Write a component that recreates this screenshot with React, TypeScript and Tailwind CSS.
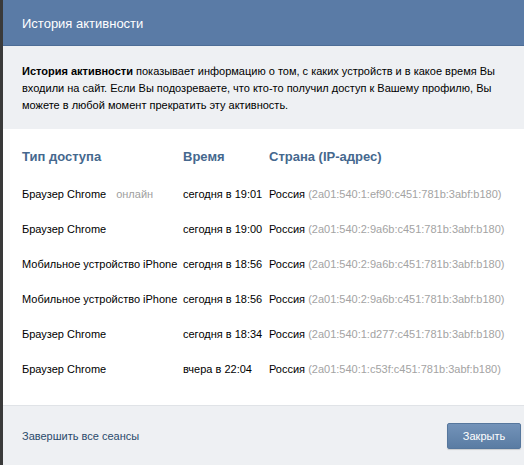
import React from 'react';

const rows = [
  { type: 'Браузер Chrome', online: true, time: 'сегодня в 19:01', ip: '2a01:540:1:ef90:c451:781b:3abf:b180' },
  { type: 'Браузер Chrome', online: false, time: 'сегодня в 19:00', ip: '2a01:540:2:9a6b:c451:781b:3abf:b180' },
  { type: 'Мобильное устройство iPhone', online: false, time: 'сегодня в 18:56', ip: '2a01:540:2:9a6b:c451:781b:3abf:b180' },
  { type: 'Мобильное устройство iPhone', online: false, time: 'сегодня в 18:56', ip: '2a01:540:2:9a6b:c451:781b:3abf:b180' },
  { type: 'Браузер Chrome', online: false, time: 'сегодня в 18:34', ip: '2a01:540:1:d277:c451:781b:3abf:b180' },
  { type: 'Браузер Chrome', online: false, time: 'вчера в 22:04', ip: '2a01:540:1:c53f:c451:781b:3abf:b180' },
];

const App: React.FC = () => {
  return (
    <div className="flex h-[465px] w-[524px] bg-[#333] font-['Liberation_Sans',sans-serif] text-[11px]">
      <div className="w-[3px] shrink-0 bg-[#3a3a3a]" />
      <div className="flex min-w-0 flex-1 flex-col bg-white">
        {/* Header */}
        <div className="flex h-[46px] shrink-0 items-center border-b border-[#4d6d96] bg-[#5a7ba6] pl-[19px] pt-[3px] text-[13px] text-white">
          История активности
        </div>

        {/* Intro */}
        <div className="h-[83px] shrink-0 bg-[#eef0f3] px-[19px] pt-[17px] leading-[17px] text-black">
          <b>История активности</b> показывает информацию о том, с каких устройств и в какое время Вы входили на сайт. Если Вы подозреваете, что кто-то получил доступ к Вашему профилю, Вы можете в любой момент прекратить эту активность.
        </div>

        {/* Table */}
        <div className="flex-1 px-[19px] pt-[20px]">
          <div className="flex h-[16px] items-center text-[13px] font-bold text-[#45688e]">
            <div className="w-[161px] shrink-0">Тип доступа</div>
            <div className="w-[86px] shrink-0">Время</div>
            <div>Страна (IP-адрес)</div>
          </div>
          <div className="mt-[12px] flex flex-col">
            {rows.map((r, i) => (
              <div key={i} className="flex h-[35px] items-center whitespace-nowrap text-black">
                <div className="w-[161px] shrink-0">
                  {r.type}
                  {r.online && <span className="ml-[10px] text-[#a0a0a0]">онлайн</span>}
                </div>
                <div className="w-[86px] shrink-0">{r.time}</div>
                <div>
                  Россия <span className="text-[#a3a3a3]">({r.ip})</span>
                </div>
              </div>
            ))}
          </div>
        </div>

        {/* Footer */}
        <div className="flex h-[60px] shrink-0 items-center justify-between border-t border-[#e0e3e7] bg-[#eef0f3] pl-[19px] pr-[3px]">
          <span className="pt-[2px] text-[#2b4a6b]">Завершить все сеансы</span>
          <button className="mt-[1px] h-[26px] w-[74px] rounded-[2px] border border-[#56779d] bg-gradient-to-b from-[#7393b9] to-[#5a7ca3] text-white shadow-[0_1px_1px_rgba(0,0,0,0.15)]">
            Закрыть
          </button>
        </div>
      </div>
    </div>
  );
};

export default App;
